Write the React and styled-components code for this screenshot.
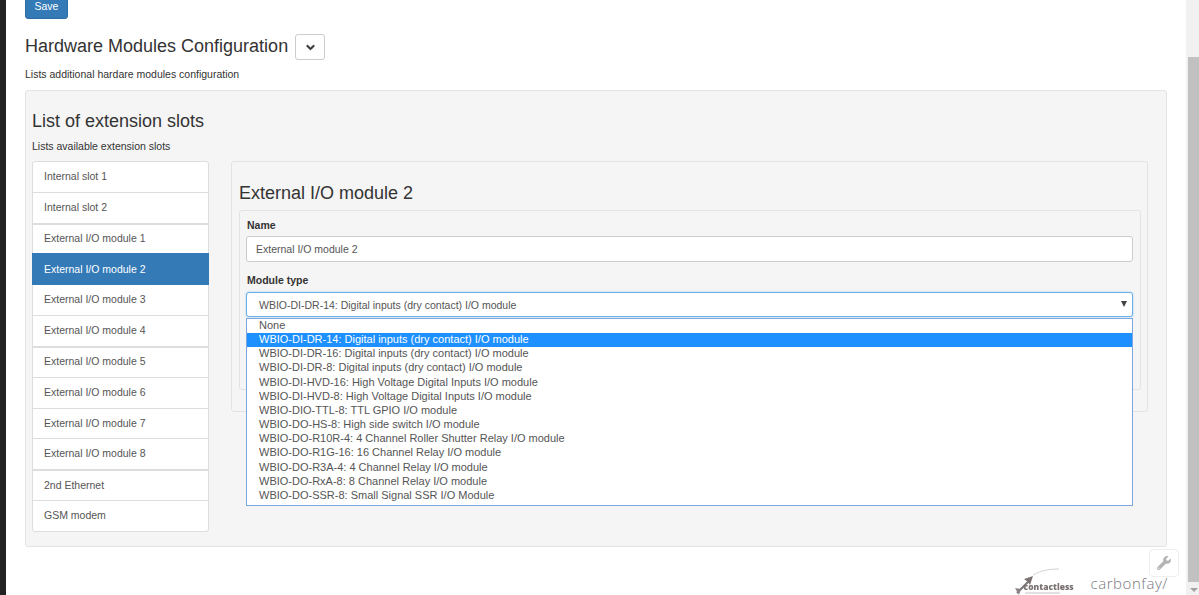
import React from "react";
import styled, { createGlobalStyle } from "styled-components";
import { FaChevronDown, FaWrench } from "react-icons/fa";

const GlobalStyle = createGlobalStyle`
  html, body {
    margin: 0;
    padding: 0;
    height: 100%;
    overflow: hidden;
    background: #fff;
  }
  * {
    box-sizing: border-box;
  }
  body {
    font-family: "Liberation Sans", Arial, sans-serif;
    font-size: 10.5px;
    color: #333;
  }
`;

const Page = styled.div`
  position: relative;
  display: flex;
  width: 1199px;
  height: 595px;
  overflow: hidden;
`;

const SideBar = styled.div`
  flex: 0 0 6px;
  background: #222;
`;

const Main = styled.div`
  flex: 1;
  min-width: 0;
  padding: 0 19px;
`;

const Scrollbar = styled.div`
  position: relative;
  flex: 0 0 13px;
  background: #f1f1f1;
`;

const ScrollThumb = styled.div`
  position: absolute;
  top: 57px;
  left: 2px;
  right: 0;
  height: 525px;
  background: #c1c1c1;
`;

const ScrollArrow = styled.div`
  position: absolute;
  bottom: 3px;
  left: 4px;
  width: 0;
  height: 0;
  border-left: 4px solid transparent;
  border-right: 4px solid transparent;
  border-top: 4px solid #a3a3a3;
`;

const SaveButton = styled.button`
  display: block;
  width: 43px;
  height: 26px;
  margin-top: -7px;
  padding: 0;
  font: 10.5px "Liberation Sans", Arial, sans-serif;
  color: #fff;
  background: #337ab7;
  border: 1px solid #2e6da4;
  border-radius: 3px;
`;

const HeaderRow = styled.div`
  display: flex;
  align-items: center;
  gap: 7px;
  margin-top: 15px;
  height: 26px;
`;

const PageTitle = styled.h3`
  margin: 0;
  padding-bottom: 2px;
  font-size: 18px;
  font-weight: 400;
  line-height: 20px;
  color: #333;
`;

const CollapseButton = styled.button`
  display: flex;
  align-items: center;
  justify-content: center;
  width: 30px;
  height: 26px;
  padding: 0;
  background: #fff;
  border: 1px solid #ccc;
  border-radius: 3px;
  color: #333;
`;

const Hint = styled.p`
  margin: ${(p) => p.$margin || "0"};
  font-size: 10.5px;
  line-height: 12px;
  color: #333;
`;

const OuterWell = styled.div`
  height: 457px;
  margin-top: 10px;
  padding: 20px 18px 0 6px;
  background: #f5f5f5;
  border: 1px solid #e3e3e3;
  border-radius: 3px;
`;

const SectionTitle = styled.h3`
  margin: 0;
  font-size: 18px;
  font-weight: 400;
  line-height: 20px;
  color: #333;
`;

const Columns = styled.div`
  display: flex;
  gap: 22px;
  margin-top: 9px;
`;

const SlotList = styled.div`
  flex: 0 0 177px;
  display: flex;
  flex-direction: column;
`;

const SlotItem = styled.div`
  display: flex;
  align-items: center;
  height: 31.83px;
  padding: 0 0 ${(p) => (p.$active ? 0 : 2)}px 11px;
  margin-top: ${(p) => (p.$first ? 0 : -1)}px;
  font-size: 10.5px;
  color: ${(p) => (p.$active ? "#fff" : "#555")};
  background: ${(p) => (p.$active ? "#337ab7" : "#fff")};
  border: 1px solid ${(p) => (p.$active ? "#337ab7" : "#ddd")};
  border-top-width: ${(p) => (p.$group ? 2 : 1)}px;
  border-radius: ${(p) => p.$radius || "0"};
  position: ${(p) => (p.$active ? "relative" : "static")};
`;

const ModulePanel = styled.div`
  flex: 0 0 917px;
  height: 251px;
  padding: 21px 6px 0 7px;
  background: #f5f5f5;
  border: 1px solid #e3e3e3;
  border-radius: 3px;
`;

const ModuleTitle = styled.h3`
  margin: 0;
  font-size: 18px;
  font-weight: 400;
  line-height: 20px;
  color: #333;
`;

const ModuleWell = styled.div`
  position: relative;
  height: 180px;
  margin-top: 7px;
  padding: 8px 7px 0 6px;
  background: #f5f5f5;
  border: 1px solid #e3e3e3;
  border-radius: 3px;
`;

const FieldLabel = styled.label`
  display: block;
  height: 12px;
  margin-top: ${(p) => p.$top || 0}px;
  margin-bottom: 5px;
  padding-left: 1px;
  font-size: 10.5px;
  font-weight: 700;
  line-height: 12px;
  color: #333;
`;

const TextInput = styled.input`
  display: block;
  width: 100%;
  height: 26px;
  padding: 0 9px;
  font: 10.5px "Liberation Sans", Arial, sans-serif;
  color: #555;
  background: #fff;
  border: 1px solid #ccc;
  border-radius: 3px;
  outline: none;
`;

const SelectBox = styled.div`
  position: relative;
  display: flex;
  align-items: center;
  height: 25px;
  margin-top: 6px;
  padding-left: 12px;
  font-size: 10.5px;
  color: #555;
  background: #fff;
  border: 1px solid #66afe9;
  border-radius: 3px;
  box-shadow: 0 0 2px rgba(102, 175, 233, 0.6);
`;

const SelectArrow = styled.span`
  position: absolute;
  right: 5px;
  top: 8px;
  width: 0;
  height: 0;
  border-left: 3px solid transparent;
  border-right: 3px solid transparent;
  border-top: 6px solid #444;
`;

const OptionList = styled.div`
  position: absolute;
  left: 6px;
  right: 7px;
  top: 107px;
  padding-bottom: 2px;
  background: #fff;
  border: 1px solid #7ba6e0;
  z-index: 2;
`;

const Option = styled.div`
  height: 14.17px;
  padding-left: 12px;
  font-size: 11px;
  line-height: 13px;
  white-space: nowrap;
  color: ${(p) => (p.$selected ? "#fff" : "#555")};
  background: ${(p) => (p.$selected ? "#1e90ff" : "#fff")};
`;

const Footer = styled.div`
  position: absolute;
  right: 31px;
  bottom: 0;
  display: flex;
  align-items: flex-end;
  gap: 16px;
  height: 27px;
`;

const ContactlessLogo = styled.div`
  position: relative;
  display: flex;
  align-items: flex-end;
  width: 62px;
  height: 27px;
  filter: blur(0.3px);
`;

const ContactlessArt = styled.svg`
  position: absolute;
  left: 0;
  top: 0;
`;

const ContactlessText = styled.span`
  margin: 0 0 4px 11px;
  font-family: "Open Sans", sans-serif;
  font-size: 8.5px;
  font-weight: 800;
  line-height: 9px;
  color: #7b7373;
`;

const CarbonLogo = styled.span`
  margin-bottom: 2px;
  font-family: "Open Sans", sans-serif;
  font-size: 15px;
  font-weight: 300;
  line-height: 20px;
  letter-spacing: 0.55px;
  color: #77787c;
`;

const WrenchButton = styled.button`
  position: absolute;
  left: 1149px;
  top: 549px;
  display: flex;
  align-items: center;
  justify-content: center;
  width: 30px;
  height: 28px;
  padding: 0;
  background: #fff;
  border: 1px solid #eee;
  border-radius: 4px;
  color: #b3b3b3;
`;

const slots = [
  { label: "Internal slot 1", radius: "3px 3px 0 0" },
  { label: "Internal slot 2" },
  { label: "External I/O module 1", group: true },
  { label: "External I/O module 2", active: true },
  { label: "External I/O module 3" },
  { label: "External I/O module 4" },
  { label: "External I/O module 5", group: true },
  { label: "External I/O module 6" },
  { label: "External I/O module 7" },
  { label: "External I/O module 8" },
  { label: "2nd Ethernet", group: true },
  { label: "GSM modem", radius: "0 0 3px 3px" },
];

const moduleTypes = [
  "None",
  "WBIO-DI-DR-14: Digital inputs (dry contact) I/O module",
  "WBIO-DI-DR-16: Digital inputs (dry contact) I/O module",
  "WBIO-DI-DR-8: Digital inputs (dry contact) I/O module",
  "WBIO-DI-HVD-16: High Voltage Digital Inputs I/O module",
  "WBIO-DI-HVD-8: High Voltage Digital Inputs I/O module",
  "WBIO-DIO-TTL-8: TTL GPIO I/O module",
  "WBIO-DO-HS-8: High side switch I/O module",
  "WBIO-DO-R10R-4: 4 Channel Roller Shutter Relay I/O module",
  "WBIO-DO-R1G-16: 16 Channel Relay I/O module",
  "WBIO-DO-R3A-4: 4 Channel Relay I/O module",
  "WBIO-DO-RxA-8: 8 Channel Relay I/O module",
  "WBIO-DO-SSR-8: Small Signal SSR I/O Module",
];

const App = () => {
  return (
    <Page>
      <GlobalStyle />
      <SideBar />
      <Main>
        <SaveButton type="button">Save</SaveButton>
        <HeaderRow>
          <PageTitle>Hardware Modules Configuration</PageTitle>
          <CollapseButton type="button">
            <FaChevronDown size={9} stroke="currentColor" strokeWidth={50} />
          </CollapseButton>
        </HeaderRow>
        <Hint $margin="8px 0 0">Lists additional hardare modules configuration</Hint>
        <OuterWell>
          <SectionTitle>List of extension slots</SectionTitle>
          <Hint $margin="9px 0 0">Lists available extension slots</Hint>
          <Columns>
            <SlotList>
              {slots.map((slot, i) => (
                <SlotItem
                  key={slot.label}
                  $first={i === 0}
                  $active={slot.active}
                  $group={slot.group}
                  $radius={slot.radius}
                >
                  {slot.label}
                </SlotItem>
              ))}
            </SlotList>
            <ModulePanel>
              <ModuleTitle>External I/O module 2</ModuleTitle>
              <ModuleWell>
                <FieldLabel>Name</FieldLabel>
                <TextInput readOnly value="External I/O module 2" />
                <FieldLabel $top={12}>Module type</FieldLabel>
                <SelectBox>
                  WBIO-DI-DR-14: Digital inputs (dry contact) I/O module
                  <SelectArrow />
                </SelectBox>
                <OptionList>
                  {moduleTypes.map((name, i) => (
                    <Option key={name} $selected={i === 1}>
                      {name}
                    </Option>
                  ))}
                </OptionList>
              </ModuleWell>
            </ModulePanel>
          </Columns>
        </OuterWell>
      </Main>
      <Scrollbar>
        <ScrollThumb />
        <ScrollArrow />
      </Scrollbar>
      <WrenchButton type="button">
        <FaWrench size={14} />
      </WrenchButton>
      <Footer>
        <ContactlessLogo>
          <ContactlessArt width="62" height="27" viewBox="0 0 62 27">
            <path d="M20 7 C27 3 35 1 46 1" fill="none" stroke="#c9c5c5" strokeWidth="0.8" />
            <path d="M4 25 L17 12" stroke="#7b7373" strokeWidth="2" />
            <path d="M20 8 L11 11 L15 14 L17 17 Z" fill="#7b7373" />
            <path d="M2 20 L8 21 L6 27 Z" fill="#8a8383" />
            <path d="M12 25 L47 25" stroke="#b5b0b0" strokeWidth="0.8" />
          </ContactlessArt>
          <ContactlessText>contactless</ContactlessText>
        </ContactlessLogo>
        <CarbonLogo>carbonfay/</CarbonLogo>
      </Footer>
    </Page>
  );
};

export default App;
